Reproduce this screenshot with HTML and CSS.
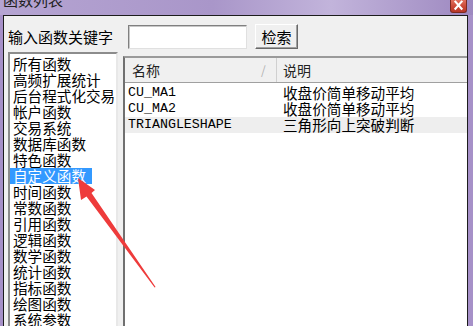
FILE: index.html
```html
<!DOCTYPE html>
<html lang="zh-CN">
<head>
    <meta charset="UTF-8">
    <title>函数列表</title>
    <link rel="stylesheet" href="styles.css">
</head>
<body>
    <div class="window">
        <div class="titlebar">
            <span class="title">函数列表</span>
            <span class="close">
                <svg width="17" height="13" viewBox="0 0 17 13"><path d="M5 1 L12 9 M12 1 L5 9" stroke="#fff" stroke-width="2.4" stroke-linecap="square"/></svg>
            </span>
        </div>

        <div class="client">
            <div class="search-row">
                <label class="search-label" for="keyword">输入函数关键字</label>
                <input class="keyword" id="keyword" type="text">
                <button class="btn">检索</button>
            </div>

            <div class="panels">
                <ul class="category-list">
                    <li><span>所有函数</span></li>
                    <li><span>高频扩展统计</span></li>
                    <li><span>后台程式化交易</span></li>
                    <li><span>帐户函数</span></li>
                    <li><span>交易系统</span></li>
                    <li><span>数据库函数</span></li>
                    <li><span>特色函数</span></li>
                    <li class="active"><span>自定义函数</span></li>
                    <li><span>时间函数</span></li>
                    <li><span>常数函数</span></li>
                    <li><span>引用函数</span></li>
                    <li><span>逻辑函数</span></li>
                    <li><span>数学函数</span></li>
                    <li><span>统计函数</span></li>
                    <li><span>指标函数</span></li>
                    <li><span>绘图函数</span></li>
                    <li><span>系统参数</span></li>
                </ul>

                <div class="func-view">
                    <div class="func-head">
                        <div class="col-name">名称<span class="sort">/</span></div>
                        <div class="col-desc">说明</div>
                    </div>
                    <div class="func-rows">
                        <div class="func-row">
                            <div class="col-name mono">CU_MA1</div>
                            <div class="col-desc">收盘价简单移动平均</div>
                        </div>
                        <div class="func-row">
                            <div class="col-name mono">CU_MA2</div>
                            <div class="col-desc">收盘价简单移动平均</div>
                        </div>
                        <div class="func-row selected">
                            <div class="col-name mono">TRIANGLESHAPE</div>
                            <div class="col-desc">三角形向上突破判断</div>
                        </div>
                    </div>
                </div>
            </div>
        </div>

        <!-- annotation arrow pointing at the selected category -->
        <svg class="arrow" width="473" height="326" viewBox="0 0 473 326">
            <polygon points="78,178 95,190 91.5,193 155.6,287 154.6,287.6 86.5,196.5 81,200" fill="#ee3b3b"/>
        </svg>
    </div>
</body>
</html>
```

FILE: styles.css
```css
body {
    margin: 0;
    padding: 0;
    font-family: "Noto Sans CJK SC", "Noto Sans", sans-serif;
}

.window {
    position: relative;
    width: 473px;
    height: 326px;
    overflow: hidden;
    background: #a690c8;
}

.titlebar {
    display: flex;
    align-items: flex-start;
    height: 15px;
    overflow: hidden;
    background: linear-gradient(90deg, #b5a4d2 0%, #a996c9 45%, #c2b4db 70%, #9d88c0 100%);
}

.title {
    margin: -9px 0 0 3px;
    font-size: 15px;
    line-height: 17px;
    color: #222;
}

.close {
    display: flex;
    margin-left: auto;
    margin-right: 6px;
    width: 17px;
    height: 13px;
    background: linear-gradient(180deg, #e0705e 0%, #c94533 60%, #b8382a 100%);
    border: 1px solid #7d2a22;
    border-top: none;
    border-radius: 0 0 3px 3px;
    box-sizing: border-box;
}

.client {
    margin: 0 5px 0 3px;
    height: 320px;
    border: 1px solid #1c1c1c;
    border-bottom: none;
    background: #f0f0f0;
}

.search-row {
    display: flex;
    align-items: center;
    padding: 8px 0 0 4px;
    height: 25px;
}

.search-label {
    width: 120px;
    font-size: 15px;
    line-height: 18px;
    color: #000;
}

.keyword {
    width: 119px;
    height: 24px;
    margin: 0;
    padding: 0;
    box-sizing: border-box;
    background: #fff;
    border: 1px solid;
    border-color: #808080 #e0e0e0 #e0e0e0 #808080;
    box-shadow: inset 1px 1px 0 #c8c8c8;
    outline: none;
}

.btn {
    margin-left: 8px;
    width: 43px;
    height: 25px;
    padding: 0;
    font-family: "Noto Sans CJK SC", sans-serif;
    font-size: 15px;
    line-height: 18px;
    color: #000;
    background: #f0f0f0;
    border: 1px solid;
    border-color: #ffffff #696969 #696969 #ffffff;
    box-shadow: inset -1px -1px 0 #a0a0a0;
}

.panels {
    display: flex;
    align-items: flex-start;
    gap: 5px;
    margin-top: 3px;
    padding-left: 4px;
}

.category-list {
    list-style: none;
    margin: 0;
    padding: 2px 0 0 0;
    width: 110px;
    height: 290px;
    box-sizing: border-box;
    background: #fff;
    border: 2px solid;
    border-color: #8c8c8c #e8e8e8 #e8e8e8 #8c8c8c;
    font-size: 14.6px;
    line-height: 16px;
    color: #000;
}

.category-list li {
    height: 16px;
    white-space: nowrap;
}

.category-list span {
    display: inline-block;
    padding: 0 6px 0 3px;
}

.category-list .active span {
    background: #3399ff;
    color: #fff;
}

.func-view {
    flex: 1;
    margin-top: 4px;
    height: 290px;
    background: #fff;
    border-top: 2px solid #9a9a9a;
    border-left: 2px solid #707070;
}

.func-head {
    display: flex;
    height: 24px;
    background: #f0f0f0;
    border-bottom: 1px solid #a0a0a0;
    font-size: 14px;
    line-height: 24px;
    color: #222;
}

.func-head .col-name {
    position: relative;
    padding-left: 7px;
    border-right: 1px solid #d0d0d0;
}

.sort {
    position: absolute;
    left: 136px;
    top: 0;
    color: #b0b0b0;
    font-size: 12px;
}

.func-head .col-desc {
    padding-left: 6px;
}

.col-name {
    width: 152px;
    box-sizing: border-box;
}

.func-rows {
    padding-top: 2px;
}

.func-row {
    display: flex;
    height: 16px;
    line-height: 16px;
    color: #000;
}

.func-row .col-name {
    padding-left: 3px;
    border-right: 1px solid transparent;
}

.func-row .col-desc {
    padding-left: 6px;
    font-size: 14.6px;
}

.func-row.selected {
    background: #eeeeee;
}

.mono {
    font-family: "Liberation Mono", monospace;
    font-size: 13.3px;
}

.arrow {
    position: absolute;
    left: 0;
    top: 0;
    pointer-events: none;
}
```
